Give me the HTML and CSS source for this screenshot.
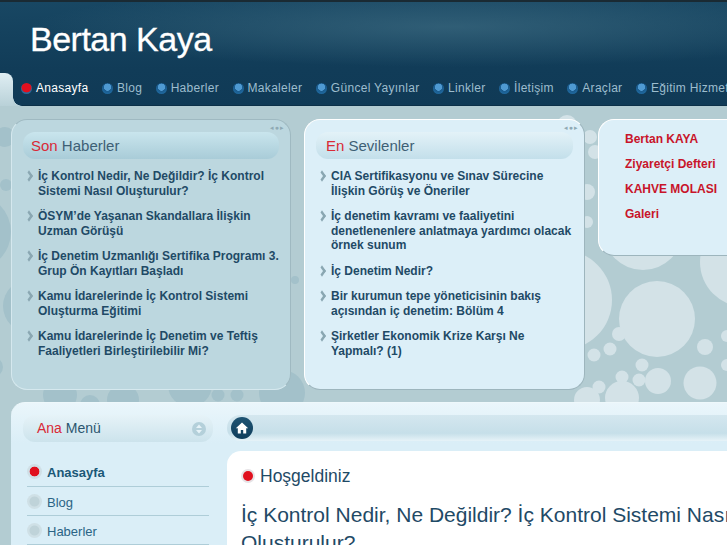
FILE: index.html
```html
<!DOCTYPE html>
<html lang="tr">
<head>
  <meta charset="UTF-8" />
  <meta name="viewport" content="width=device-width, initial-scale=1.0"/>
  <title>Bertan Kaya</title>
  <link rel="stylesheet" href="styles.css">
</head>
<body>
  <div class="sayfa">
    <svg class="desen" width="727" height="545" viewBox="0 0 727 545" aria-hidden="true">
      <g class="koyu-daire">
        <circle cx="5" cy="137" r="10"/><circle cx="6" cy="185" r="6"/><circle cx="-27" cy="232" r="38"/>
        <circle cx="30" cy="306" r="27"/><circle cx="-7" cy="367" r="10"/><circle cx="295" cy="280" r="4"/>
        <circle cx="282" cy="393" r="23"/><circle cx="60" cy="395" r="17"/><circle cx="90" cy="405" r="10"/>
        <circle cx="123" cy="400" r="16"/><circle cx="190" cy="385" r="22"/><circle cx="218" cy="395" r="6.5"/>
        <circle cx="237" cy="395" r="6.5"/>
      </g>
      <g class="acik-daire">
        <circle cx="562" cy="300" r="50"/><circle cx="643" cy="230" r="40"/><circle cx="745" cy="262" r="45"/>
        <circle cx="657" cy="319" r="38"/><circle cx="619" cy="334" r="7"/><circle cx="610" cy="349" r="6.5"/>
        <circle cx="594" cy="355" r="6.5"/><circle cx="642" cy="365" r="6.5"/><circle cx="639" cy="380" r="6.5"/>
        <circle cx="658" cy="381" r="13"/><circle cx="700" cy="383" r="16.5"/><circle cx="705" cy="347" r="8"/>
        <circle cx="622" cy="377" r="6.5"/><circle cx="599" cy="387" r="6.5"/><circle cx="622" cy="398" r="17"/>
        <circle cx="587" cy="400" r="13"/><circle cx="727" cy="336" r="6"/><circle cx="727" cy="365" r="6"/>
        <circle cx="590" cy="137" r="7"/><circle cx="595" cy="152" r="7"/><circle cx="587" cy="192" r="8"/>
        <circle cx="587" cy="222" r="6"/><circle cx="567" cy="125" r="10"/>
      </g>
    </svg>

    <header class="ust">
      <div class="logo">Bertan Kaya</div>
      <nav class="menu">
        <a class="secili" href="#"><i></i>Anasayfa</a>
        <a href="#"><i></i>Blog</a>
        <a href="#"><i></i>Haberler</a>
        <a href="#"><i></i>Makaleler</a>
        <a href="#"><i></i>Güncel Yayınlar</a>
        <a href="#"><i></i>Linkler</a>
        <a href="#"><i></i>İletişim</a>
        <a href="#"><i></i>Araçlar</a>
        <a href="#"><i></i>Eğitim Hizmetleri</a>
      </nav>
    </header>

    <section class="ust-paneller">
      <div class="panel koyu">
        <span class="noktalar">◂●▸</span>
        <h3 class="baslik"><em>Son</em> Haberler</h3>
        <ul class="haberler">
          <li>İç Kontrol Nedir, Ne Değildir? İç Kontrol Sistemi Nasıl Oluşturulur?</li>
          <li>ÖSYM’de Yaşanan Skandallara İlişkin Uzman Görüşü</li>
          <li>İç Denetim Uzmanlığı Sertifika Programı 3. Grup Ön Kayıtları Başladı</li>
          <li>Kamu İdarelerinde İç Kontrol Sistemi Oluşturma Eğitimi</li>
          <li>Kamu İdarelerinde İç Denetim ve Teftiş Faaliyetleri Birleştirilebilir Mi?</li>
        </ul>
      </div>
      <div class="panel acik">
        <span class="noktalar">◂●▸</span>
        <h3 class="baslik"><em>En</em> Sevilenler</h3>
        <ul class="haberler">
          <li>CIA Sertifikasyonu ve Sınav Sürecine İlişkin Görüş ve Öneriler</li>
          <li>İç denetim kavramı ve faaliyetini denetlenenlere anlatmaya yardımcı olacak örnek sunum</li>
          <li>İç Denetim Nedir?</li>
          <li>Bir kurumun tepe yöneticisinin bakış açısından iç denetim: Bölüm 4</li>
          <li>Şirketler Ekonomik Krize Karşı Ne Yapmalı? (1)</li>
        </ul>
      </div>
      <div class="panel linkler">
        <a href="#">Bertan KAYA</a>
        <a href="#">Ziyaretçi Defteri</a>
        <a href="#">KAHVE MOLASI</a>
        <a href="#">Galeri</a>
      </div>
    </section>

    <section class="ana">
      <aside class="sol">
        <h3 class="baslik menu-baslik">
          <span><em>Ana</em> Menü</span>
          <svg width="14" height="14" viewBox="0 0 14 14"><circle cx="7" cy="7" r="7" fill="#b4d0da"/><path d="M7 2.5 10 6H4zM7 11.5 4 8h6z" fill="#e6f3f8"/></svg>
        </h3>
        <ul class="sol-menu">
          <li class="secili"><i></i>Anasayfa</li>
          <li><i></i>Blog</li>
          <li><i></i>Haberler</li>
        </ul>
      </aside>
      <div class="icerik">
        <div class="yol">
          <span class="ev">
            <svg width="14" height="14" viewBox="0 0 14 14"><path d="M7 1.5 0.8 7.2h2v5.3h3V9h2.4v3.5h3V7.2h2z" fill="#fff"/></svg>
          </span>
        </div>
        <div class="kart">
          <h2><i></i>Hoşgeldiniz</h2>
          <h1>İç Kontrol Nedir, Ne Değildir? İç Kontrol Sistemi Nasıl Oluşturulur?</h1>
        </div>
      </div>
    </section>
  </div>
</body>
</html>
```

FILE: styles.css
```css
html, body {
  margin: 0;
  height: 545px;
  overflow: hidden;
}
body {
  font-family: 'Liberation Sans', Arial, sans-serif;
  background: #b3ccd2;
}
.sayfa {
  position: relative;
  width: 727px;
  height: 545px;
  overflow: hidden;
}
.desen {
  position: absolute;
  left: 0;
  top: 0;
}
.koyu-daire { fill: #a3c1ca; }
.acik-daire { fill: #d3e2e7; }
.ust {
  position: relative;
  box-sizing: border-box;
  height: 106px;
  padding-top: 3px;
  border-top: 2px solid #1a2a33;
  border-bottom: 1px solid #0c3048;
  background:
    radial-gradient(ellipse 420px 40px at 62% 24%, rgba(62, 108, 130, 0.65), rgba(62, 108, 130, 0)),
    linear-gradient(#184763, #113c58 65%, #103a56);
}
.logo {
  padding: 12px 0 0 30px;
  height: 54px;
  font-size: 34px;
  line-height: 44px;
  letter-spacing: -0.5px;
  color: #fff;
  -webkit-text-stroke: 0.3px #fff;
}
.menu {
  display: flex;
  white-space: nowrap;
  padding-left: 21px;
  margin-top: 9px;
  font-size: 12px;
  line-height: 16px;
  letter-spacing: 0.3px;
}
.menu::before {
  content: "";
  position: absolute;
  left: 0;
  bottom: -1px;
  width: 13px;
  height: 33px;
  background: linear-gradient(#dfeef3, #b9d1d8);
  border-radius: 0 8px 0 0;
}
.menu::after {
  content: "";
  position: absolute;
  left: 13px;
  bottom: -1px;
  width: 9px;
  height: 9px;
  background: radial-gradient(circle at 100% 0, #103a56 8.5px, #b9d1d8 9px);
}
.menu a {
  color: #9dbdce;
  text-decoration: none;
  margin-right: 13.5px;
  display: flex;
  align-items: center;
}
.menu a.secili { color: #fff; }
.menu i {
  width: 11px;
  height: 11px;
  margin-right: 4px;
  border-radius: 50%;
  background: radial-gradient(circle at 50% 38%, #4f9ad2 0 38%, #1b5c8e 44%, #2273ad 100%);
}
.menu .secili i { background: radial-gradient(circle at 50% 40%, #e0101e 0 55%, #2a6a9a 62%); }

.ust-paneller {
  position: absolute;
  top: 119px;
  left: 11px;
  display: flex;
  gap: 13px;
}
.panel {
  position: relative;
  box-sizing: border-box;
  width: 281px;
  height: 271px;
  padding: 12px;
  border-radius: 16px;
  border: 1px solid #9db5bd;
}
.koyu { width: 280px; padding-right: 10px; background: #bcd7df; border-color: #9fb9c1 #9fb9c1 #d5e8ee #d5e8ee; }
.acik { background: #dceff8; border-color: #fff #9db5bd #9db5bd #fff; }
.noktalar {
  position: absolute;
  right: 5px;
  top: 1px;
  font-size: 7px;
  line-height: 14px;
  letter-spacing: 1px;
  color: #8fa9b4;
}
.baslik {
  margin: 0 -1px;
  height: 27px;
  padding-left: 8px;
  border-radius: 12px;
  background: linear-gradient(#c9e5ed, #a9ccd8);
  font-size: 15px;
  font-weight: normal;
  line-height: 27px;
  color: #3e5f75;
}
.koyu .baslik { margin-right: 1px; }
.acik .baslik { padding-left: 10px; background: linear-gradient(#e3f2f8, #c3dfea); }
.baslik em { font-style: normal; color: #d92a37; }
.haberler {
  list-style: none;
  margin: 10px 0 0;
  padding: 0;
}
.haberler li {
  position: relative;
  padding-left: 14px;
  margin-bottom: 11px;
  font-size: 12px;
  font-weight: bold;
  line-height: 14.5px;
  color: #1f4a66;
}
.haberler li::before {
  content: "";
  position: absolute;
  left: 1px;
  top: 3px;
  width: 5px;
  height: 5px;
  border-top: 3px solid #8aa7b2;
  border-right: 3px solid #8aa7b2;
  transform: scale(0.7, 1) rotate(45deg);
}
.linkler {
  width: 160px;
  height: 137px;
  padding: 12px 0 0 26px;
  background: #dceff8;
  border-color: #fff #9db5bd #9db5bd #fff;
  display: flex;
  flex-direction: column;
  gap: 10.6px;
}
.linkler a {
  font-size: 12px;
  font-weight: bold;
  line-height: 14.5px;
  color: #c8142a;
  text-decoration: none;
}

.ana {
  position: absolute;
  top: 402px;
  left: 11px;
  width: 790px;
  height: 200px;
  box-sizing: border-box;
  display: flex;
  gap: 14px;
  padding: 12px;
  border-radius: 14px 0 0 0;
  border-top: 1px solid #eef8fb;
  background: linear-gradient(#eaf6fb, #daeef7 40px);
}
.sol { width: 190px; flex: none; }
.menu-baslik {
  margin: 0;
  display: flex;
  justify-content: space-between;
  align-items: center;
  padding: 0 7px 0 14px;
  background: linear-gradient(#e6f3f8, #cce3ec);
  color: #2c566f;
  font-size: 14px;
}
.sol-menu {
  list-style: none;
  margin: 15px 4px 0;
  padding: 0;
  font-size: 13px;
  color: #2a6485;
}
.sol-menu li {
  box-sizing: border-box;
  display: flex;
  align-items: center;
  height: 29px;
  padding-top: 2px;
  border-bottom: 1px solid #aecdd8;
}
.sol-menu li.secili { font-weight: bold; color: #1a5877; height: 30px; }
.sol-menu i {
  width: 15px;
  height: 15px;
  margin: -2px 5px 0 0;
  border-radius: 50%;
  background: radial-gradient(circle, #bfd3d9 0 4.5px, #cfe0e6 5.5px);
}
.sol-menu .secili i {
  background: radial-gradient(circle, #e0101e 0 4.5px, #cfdfe6 5.2px);
}
.icerik { flex: 1; min-width: 0; }
.yol {
  height: 26px;
  display: flex;
  align-items: center;
  border-radius: 13px 0 0 13px;
  background: linear-gradient(#d4e7ef, #c6dfe9 70%, #e6f3f8);
  padding-left: 4px;
}
.ev {
  width: 22px;
  height: 22px;
  border-radius: 50%;
  background: linear-gradient(#1f5473, #0f3e5c);
  display: flex;
  align-items: center;
  justify-content: center;
}
.kart {
  margin-top: 10px;
  padding: 16px 14px;
  height: 200px;
  background: #fff;
  border-radius: 14px 0 0 0;
}
.kart h2 {
  margin: 0;
  display: flex;
  align-items: center;
  font-size: 17.5px;
  font-weight: normal;
  line-height: 18px;
  color: #1f4a66;
}
.kart h2 i {
  width: 10px;
  height: 10px;
  margin: 0 7px 0 2px;
  border-radius: 50%;
  background: #e0101e;
  box-shadow: 0 0 0 2px #e6e3e6;
}
.kart h1 {
  margin: 16px 0 0;
  font-size: 21px;
  font-weight: normal;
  line-height: 28px;
  color: #1f4a66;
}
```
